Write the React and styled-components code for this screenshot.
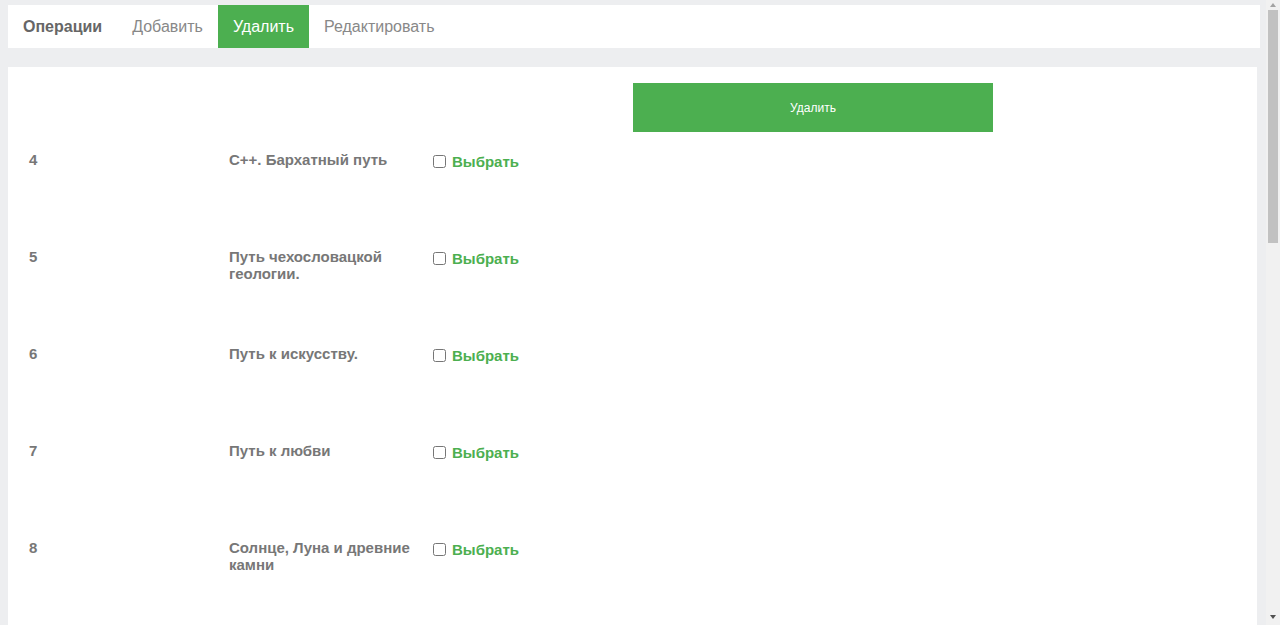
import styled, { createGlobalStyle } from "styled-components";

const GlobalStyle = createGlobalStyle`
  html, body {
    margin: 0;
    padding: 0;
    background: #edeef0;
    font-family: "Liberation Sans", Arial, sans-serif;
    overflow: hidden;
  }
`;

const StyledShell = styled.div`
  display: flex;
  height: 100vh;
`;

const StyledPage = styled.main`
  flex: 1;
  overflow: hidden;
  padding: 5px 6px 0 8px;
`;

const StyledRail = styled.div`
  width: 14px;
  background: #f1f1f1;
  display: flex;
  flex-direction: column;
  align-items: center;
`;

const StyledRailArrow = styled.div`
  width: 0;
  height: 0;
  border-left: 3.5px solid transparent;
  border-right: 3.5px solid transparent;
  ${(p) =>
    p.$down
      ? "border-top: 4px solid #505050; margin-top: auto; margin-bottom: 6px;"
      : "border-bottom: 4px solid #a3a3a3; margin-top: 3px;"}
`;

const StyledRailThumb = styled.div`
  width: 10px;
  height: 233px;
  margin-top: 3px;
  background: #c1c1c1;
`;

const StyledNav = styled.nav`
  display: flex;
  background: #fff;
  height: 43px;
`;

const StyledTab = styled.a`
  display: flex;
  align-items: center;
  padding: 0 15px;
  font-size: 16px;
  font-weight: ${(p) => (p.$title ? "bold" : "normal")};
  color: ${(p) => (p.$active ? "#fff" : p.$title ? "#666" : "#888")};
  background: ${(p) => (p.$active ? "#4caf50" : "transparent")};
  cursor: pointer;
`;

const StyledPanel = styled.section`
  margin: 19px 3px 0 0;
  background: #fff;
  padding: 16px 0 1000px 21px;
`;

const StyledTable = styled.div`
  display: grid;
  grid-template-columns: 200px 204px 200px 360px;
  grid-auto-rows: 97px;
  grid-template-rows: 68px;
`;

const StyledButtonCell = styled.div`
  grid-column: 4;
`;

const StyledDeleteButton = styled.button`
  width: 360px;
  height: 49px;
  border: none;
  background: #4caf50;
  color: #fff;
  font-family: "Liberation Sans", Arial, sans-serif;
  font-size: 12px;
  cursor: pointer;
`;

const StyledCell = styled.div`
  font-size: 15px;
  font-weight: bold;
  color: #777;
  line-height: 17px;
  padding-right: 16px;
`;

const StyledSelect = styled.label`
  display: flex;
  align-items: center;
  gap: 6px;
  height: 17px;
  margin-top: 2px;
  font-size: 15px;
  font-weight: bold;
  color: #4caf50;

  input {
    width: 13px;
    height: 13px;
    margin: 0;
  }
`;

const books = [
  { id: 4, title: "С++. Бархатный путь" },
  { id: 5, title: "Путь чехословацкой геологии." },
  { id: 6, title: "Путь к искусству." },
  { id: 7, title: "Путь к любви" },
  { id: 8, title: "Солнце, Луна и древние камни" },
];

const App = () => {
  return (
    <StyledShell>
      <GlobalStyle />
      <StyledPage>
        <StyledNav>
          <StyledTab $title>Операции</StyledTab>
          <StyledTab>Добавить</StyledTab>
          <StyledTab $active>Удалить</StyledTab>
          <StyledTab>Редактировать</StyledTab>
        </StyledNav>
        <StyledPanel>
          <StyledTable>
            <StyledButtonCell>
              <StyledDeleteButton>Удалить</StyledDeleteButton>
            </StyledButtonCell>
            {books.map((book) => [
              <StyledCell key={`id-${book.id}`}>{book.id}</StyledCell>,
              <StyledCell key={`t-${book.id}`}>{book.title}</StyledCell>,
              <StyledSelect key={`s-${book.id}`}>
                <input type="checkbox" />
                Выбрать
              </StyledSelect>,
              <div key={`e-${book.id}`} />,
            ])}
          </StyledTable>
        </StyledPanel>
      </StyledPage>
      <StyledRail>
        <StyledRailArrow />
        <StyledRailThumb />
        <StyledRailArrow $down />
      </StyledRail>
    </StyledShell>
  );
};

export default App;
